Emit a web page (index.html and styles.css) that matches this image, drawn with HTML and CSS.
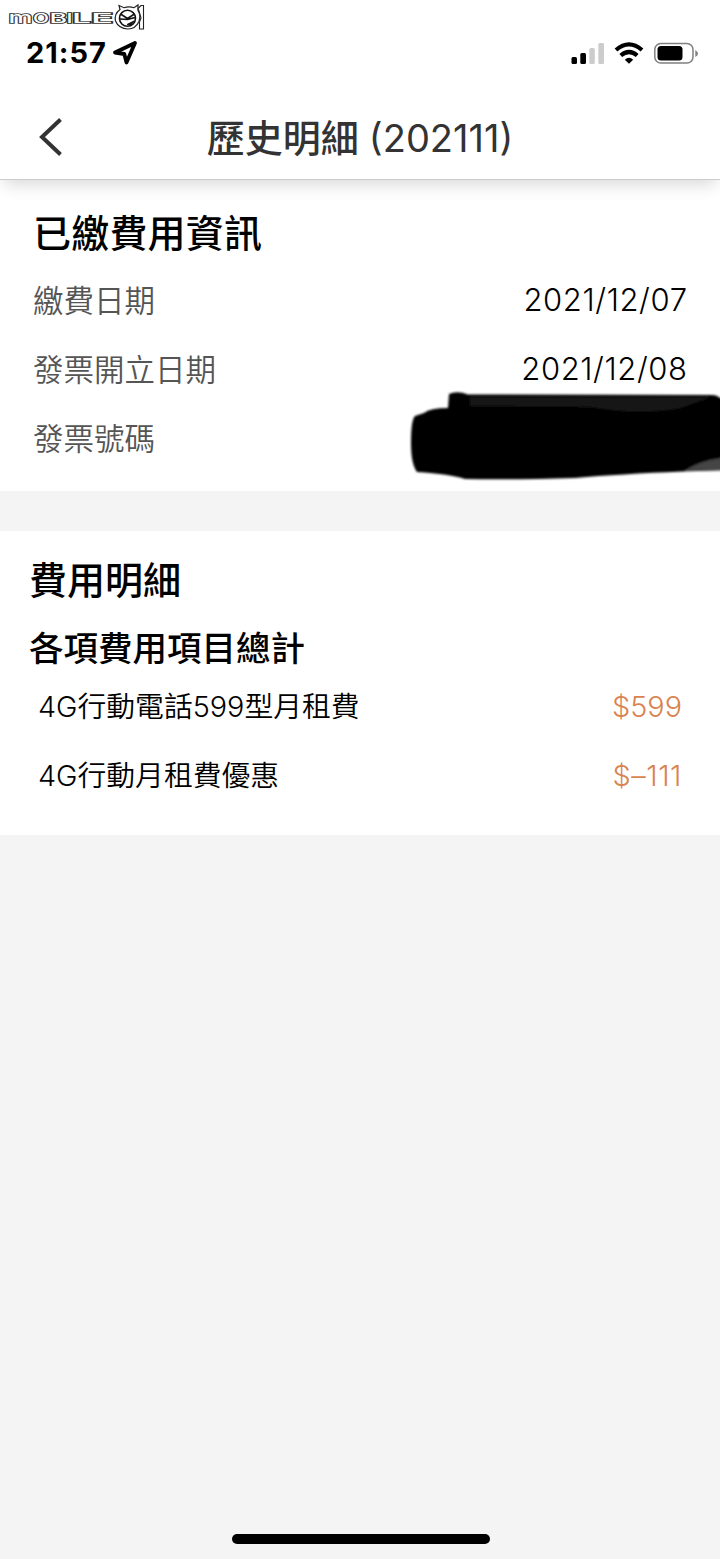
FILE: index.html
```html
<!DOCTYPE html>
<html lang="zh-Hant">
<head>
<meta charset="utf-8">
<title>歷史明細</title>
<link rel="stylesheet" href="styles.css">
</head>
<body>
<div class="screen">
  <header class="top">
    <svg class="logo" width="140" height="28" viewBox="6 3 140 28">
      <g class="logo-text">
        <text x="8.500" y="22.500" font-size="16.500" textLength="24" lengthAdjust="spacingAndGlyphs">m</text>
        <text x="33" y="22.500" font-size="12.800" textLength="16" lengthAdjust="spacingAndGlyphs">O</text>
        <text x="49.500" y="22.500" font-size="12.800" textLength="17.500" lengthAdjust="spacingAndGlyphs">B</text>
        <text x="66.500" y="22.500" font-size="12.800" textLength="6" lengthAdjust="spacingAndGlyphs">I</text>
        <text x="72" y="22.500" font-size="12.800" textLength="19" lengthAdjust="spacingAndGlyphs">L</text>
        <text x="91" y="22.500" font-size="12.800" textLength="22" lengthAdjust="spacingAndGlyphs">E</text>
      </g>
      <path d="M120 9.500L119 5.500L124 7.700Q129 6 134 7.700L138 5V10.500Q141 15 139 21.500Q135.500 29 128 29Q118.500 28.500 115.500 21Q114 14 120 9.500Z" fill="#fff" stroke="#222" stroke-width="1.200"/>
      <circle cx="127.500" cy="18.300" r="8" fill="#fff" stroke="#111" stroke-width="1.600"/>
      <path d="M120.500 14L127.500 18.500L134.500 14M120 19L127.500 19.500L135 17.500" fill="none" stroke="#111" stroke-width="1.500"/>
      <path d="M127 24.500L134 21L131 25Z" fill="#111" stroke="#111"/>
      <path d="M138 8.500L141 5.500H143.500V29H139.500V22L141 18L139 11Z" fill="#fff" stroke="#222" stroke-width="1.100"/>
    </svg>
    <div class="status">
      <div class="clock"><span class="time">21:57</span>
        <svg width="26" height="26" viewBox="0 0 26 26"><path d="M23 3L3 12.500L12.300 14L14.500 22.500Z" fill="none" stroke="#000" stroke-width="3.800" stroke-linejoin="round"/></svg>
      </div>
      <svg width="130" height="24" viewBox="570 40 130 24">
        <rect x="571.500" y="56" width="5.500" height="7" rx="1.500"/>
        <rect x="580.300" y="52" width="5.700" height="11" rx="1.500"/>
        <rect x="589.300" y="47" width="5.500" height="16" rx="1.500" fill="#ccc"/>
        <rect x="598.300" y="42" width="5.700" height="21" rx="1.500" fill="#ccc"/>
        <path d="M616 49Q629 37.800 642 49M620.800 54.500Q629 47.500 637.200 54.500" fill="none" stroke="#000" stroke-width="4.200"/>
        <path d="M624.800 58.800Q629 54.500 633.200 58.800L629 62.800Z"/>
        <rect x="654.800" y="42.500" width="38.200" height="19.500" rx="6" fill="none" stroke="#808080" stroke-width="1.500"/>
        <rect x="657.500" y="45" width="25" height="14.500" rx="3.500"/>
        <path d="M695.300 49Q698 50.500 698 52.500Q698 54.500 695.300 56Z" fill="#808080"/>
      </svg>
    </div>
    <nav class="nav">
      <svg class="back" width="24" height="38" viewBox="0 0 24 38"><path d="M21.500 1.500L3 19L21.500 36.500" fill="none" stroke="#333" stroke-width="4"/></svg>
      <h1 class="title">歷史明細 <span class="period">(202111)</span></h1>
    </nav>
  </header>
  <section class="paid">
    <h2 class="heading">已繳費用資訊</h2>
    <div class="row"><span class="label">繳費日期</span><span class="date">2021/12/07</span></div>
    <div class="row"><span class="label">發票開立日期</span><span class="date">2021/12/08</span></div>
    <div class="row"><span class="label">發票號碼</span></div>
    <svg class="redaction" width="320" height="100" viewBox="400 390 320 100">
      <defs><filter id="soft" x="-5%" y="-10%" width="110%" height="120%"><feGaussianBlur stdDeviation="1.3"/></filter></defs>
      <g filter="url(#soft)">
        <path d="M449 394Q457 390.500 468 394.500L712 395Q717 395 720 398L730 398V470L683 471.500Q620 474 575 478Q510 480 465 479Q450 474 417 472Q411 464 411 443Q411 420 415 416L424 413Q430 408 448 408Z"/>
        <path d="M470 397H712Q700 401 681 408Q640 416 590 407L470 406Z" fill="#141414"/>
        <path d="M684 471Q700 460 728 457V470Z" fill="#444"/>
      </g>
    </svg>
  </section>
  <section class="fees">
    <h2 class="heading">費用明細</h2>
    <h3 class="subheading">各項費用項目總計</h3>
    <div class="fee"><span class="item">4G行動電話599型月租費</span><span class="amount">$599</span></div>
    <div class="fee"><span class="item">4G行動月租費優惠</span><span class="amount discount">$–111</span></div>
  </section>
  <footer class="bottom"><div class="home"></div></footer>
</div>
</body>
</html>
```
FILE: styles.css
```css
* { box-sizing: border-box; }
body { margin: 0; background: #f4f4f4; font-family: Inter, "Noto Sans CJK TC", sans-serif; color: #000; }
svg { display: block; flex: none; }
h1, h2, h3 { margin: 0; }
.screen { height: 1559px; display: flex; flex-direction: column; overflow: hidden; }
.top { height: 180px; flex: none; background: #fff; border-bottom: 1px solid #ccc; box-shadow: 0 8px 16px -4px rgba(0,0,0,.16); position: relative; z-index: 1; padding-top: 3px; }
.logo { margin-left: 6px; }
.logo-text { font-family: Inter, sans-serif; font-weight: 500; fill: #fff; stroke: #333; stroke-width: 1.6; paint-order: stroke; }
.status { height: 44px; display: flex; justify-content: space-between; align-items: center; padding: 0 20px 0 26px; }
.clock { display: flex; align-items: center; gap: 5px; }
.time { font-size: 29px; font-weight: 700; line-height: 34px; letter-spacing: 1px; }
.nav { height: 84px; margin-top: 20px; display: grid; grid-template-columns: 100px 1fr 100px; align-items: center; }
.back { margin-left: 39px; }
.title { font-size: 38px; line-height: 56px; font-weight: 500; color: #333; text-align: center; white-space: nowrap; padding-top: 2px; }
.period { font-weight: 400; }
.paid { height: 311px; flex: none; background: #fff; padding: 24px 33px 0; position: relative; }
.heading { font-size: 38px; line-height: 56px; font-weight: 500; }
.row { height: 69px; display: flex; justify-content: space-between; align-items: center; }
.paid .heading { height: 61px; padding-top: 1px; letter-spacing: .2px; }
.label { font-size: 30.5px; font-weight: 350; color: #555; line-height: 44px; padding-top: 2px; }
.date { font-size: 31px; font-weight: 300; line-height: 40px; letter-spacing: .6px; margin-right: -.6px; }
.redaction { position: absolute; left: 400px; top: 210px; }
.fees { height: 304px; flex: none; margin-top: 40px; background: #fff; padding: 21px 38px 0 29px; }
.subheading { font-size: 34.5px; line-height: 50px; font-weight: 500; margin-top: 16px; }
.fee { height: 69px; display: flex; align-items: center; justify-content: space-between; padding: 0 0 4px 9px; }
.item { font-size: 28.8px; line-height: 44px; font-weight: 350; white-space: nowrap; }
.amount { font-size: 28.8px; line-height: 40px; font-weight: 300; color: #d98350; }
.discount { letter-spacing: .6px; }
.bottom { flex: 1; display: flex; flex-direction: column; justify-content: flex-end; align-items: center; padding: 0 0 15px 1px; }
.home { width: 258px; height: 10px; border-radius: 5px; background: #000; }
```
